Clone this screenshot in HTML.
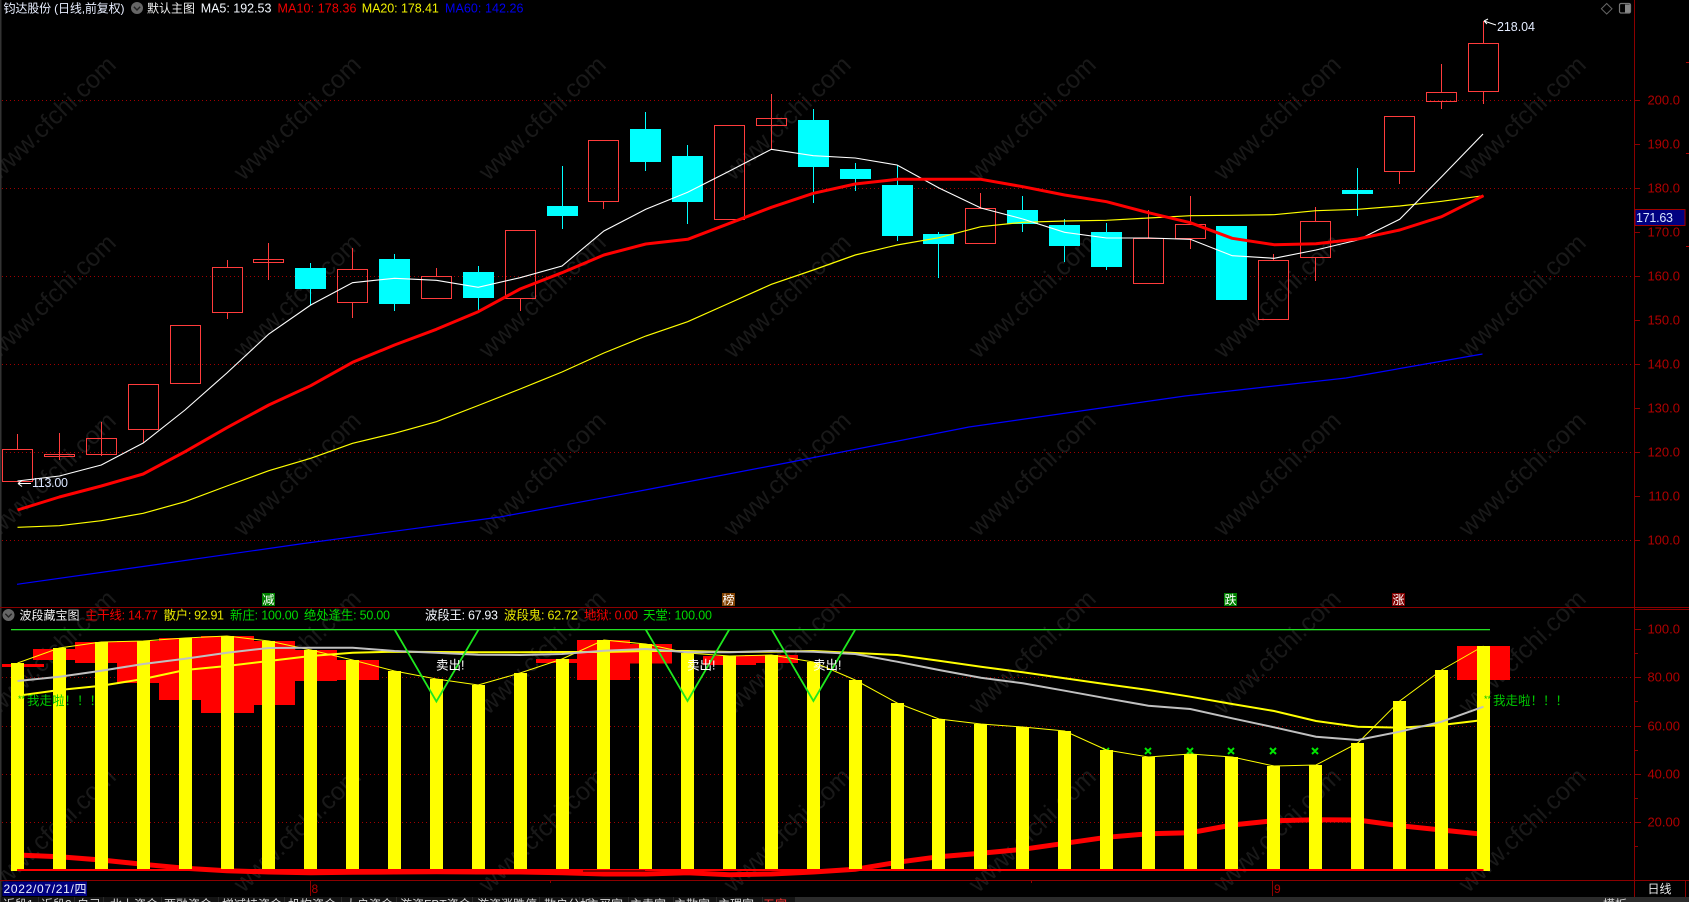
<!DOCTYPE html>
<html>
<head>
<meta charset="utf-8">
<style>
html,body{margin:0;padding:0;background:#000;width:1689px;height:902px;overflow:hidden}
svg{display:block;position:absolute;left:0;top:0}
text{font-family:"Liberation Sans","Noto Sans CJK SC",sans-serif;font-size:12.5px}
.cj{font-size:12px}
.wm text{font-size:25px;fill:#191919}
.ax text{font-size:13px;fill:#b00000;text-anchor:end}
.bt text{font-size:12px;fill:#d8d8d8}
</style>
</head>
<body>
<svg width="1689" height="902" viewBox="0 0 1689 902" xmlns="http://www.w3.org/2000/svg">
<rect width="1689" height="902" fill="#000"/>

<!-- watermark -->
<g class="wm" text-anchor="middle">
<text transform="translate(58 124) rotate(-44)">www.cfchi.com</text><text transform="translate(303 124) rotate(-44)">www.cfchi.com</text><text transform="translate(548 124) rotate(-44)">www.cfchi.com</text><text transform="translate(793 124) rotate(-44)">www.cfchi.com</text><text transform="translate(1038 124) rotate(-44)">www.cfchi.com</text><text transform="translate(1283 124) rotate(-44)">www.cfchi.com</text><text transform="translate(1528 124) rotate(-44)">www.cfchi.com</text>
<text transform="translate(58 302) rotate(-44)">www.cfchi.com</text><text transform="translate(303 302) rotate(-44)">www.cfchi.com</text><text transform="translate(548 302) rotate(-44)">www.cfchi.com</text><text transform="translate(793 302) rotate(-44)">www.cfchi.com</text><text transform="translate(1038 302) rotate(-44)">www.cfchi.com</text><text transform="translate(1283 302) rotate(-44)">www.cfchi.com</text><text transform="translate(1528 302) rotate(-44)">www.cfchi.com</text>
<text transform="translate(58 480) rotate(-44)">www.cfchi.com</text><text transform="translate(303 480) rotate(-44)">www.cfchi.com</text><text transform="translate(548 480) rotate(-44)">www.cfchi.com</text><text transform="translate(793 480) rotate(-44)">www.cfchi.com</text><text transform="translate(1038 480) rotate(-44)">www.cfchi.com</text><text transform="translate(1283 480) rotate(-44)">www.cfchi.com</text><text transform="translate(1528 480) rotate(-44)">www.cfchi.com</text>
<text transform="translate(58 658) rotate(-44)">www.cfchi.com</text><text transform="translate(303 658) rotate(-44)">www.cfchi.com</text><text transform="translate(548 658) rotate(-44)">www.cfchi.com</text><text transform="translate(793 658) rotate(-44)">www.cfchi.com</text><text transform="translate(1038 658) rotate(-44)">www.cfchi.com</text><text transform="translate(1283 658) rotate(-44)">www.cfchi.com</text><text transform="translate(1528 658) rotate(-44)">www.cfchi.com</text>
<text transform="translate(58 836) rotate(-44)">www.cfchi.com</text><text transform="translate(303 836) rotate(-44)">www.cfchi.com</text><text transform="translate(548 836) rotate(-44)">www.cfchi.com</text><text transform="translate(793 836) rotate(-44)">www.cfchi.com</text><text transform="translate(1038 836) rotate(-44)">www.cfchi.com</text><text transform="translate(1283 836) rotate(-44)">www.cfchi.com</text><text transform="translate(1528 836) rotate(-44)">www.cfchi.com</text>
</g>

<!-- frame lines -->
<rect x="0" y="0" width="1.5" height="897" fill="#333"/>
<g stroke="#8b0000" stroke-width="1" fill="none">
<path d="M0 607.5H1689M1635 609.5H1689M0 880.5H1689M1634.5 0V897M1685.5 880V897"/>
</g>

<!-- main grid -->
<g stroke="#a00000" stroke-width="1" stroke-dasharray="1 3" fill="none">
<path d="M2 100.5H1634M2 188.5H1634M2 276.5H1634M2 364.5H1634M2 452.5H1634M2 540.5H1634"/>
<path d="M2 677.5H1634M2 726.5H1634M2 774.5H1634M2 822.5H1634"/>
</g>

<!-- axis ticks -->
<g stroke="#8b0000" stroke-width="1" fill="none">
<path d="M1634 100.5h6M1634 144.5h6M1634 188.5h6M1634 232.5h6M1634 276.5h6M1634 320.5h6M1634 364.5h6M1634 408.5h6M1634 452.5h6M1634 496.5h6M1634 540.5h6"/>
<path d="M1635 629.5h6M1635 677.5h6M1635 726.5h6M1635 774.5h6M1635 822.5h6M1635 653.5h3M1635 701.5h3M1635 750.5h3M1635 798.5h3M1635 846.5h3"/>
<path d="M310.5 880V896M1272.5 880V896M550.5 880v3M1031.5 880v3"/>
<path d="M1686 62.5h3M1686 246.5h3M1686 153.5h3" stroke="#b00000"/>
</g>

<g class="ax">
<text x="1680" y="104.5">200.0</text>
<text x="1680" y="148.5">190.0</text>
<text x="1680" y="192.5">180.0</text>
<text x="1680" y="236.5">170.0</text>
<text x="1680" y="280.5">160.0</text>
<text x="1680" y="324.5">150.0</text>
<text x="1680" y="368.5">140.0</text>
<text x="1680" y="412.5">130.0</text>
<text x="1680" y="456.5">120.0</text>
<text x="1680" y="500.5">110.0</text>
<text x="1680" y="544.5">100.0</text>
<text x="1680" y="633.5">100.0</text>
<text x="1680" y="681.5">80.00</text>
<text x="1680" y="730.5">60.00</text>
<text x="1680" y="778.5">40.00</text>
<text x="1680" y="826.5">20.00</text>
</g>

<!-- current price tag -->
<rect x="1635" y="209.5" width="50" height="16" fill="#000080" stroke="#a00000"/>
<text x="1636" y="222" fill="#d8e4ff" textLength="37">171.63</text>

<!-- wicks red -->
<path fill="none" stroke="#ff3c3c" stroke-width="1" d="M17.5 434V449M59.5 433V460M101.5 422V456M143.5 430V443M227.5 260V267M227.5 313V319M268.5 243V280M352.5 248V269M352.5 303V318M436.5 268V276M520.5 299V311M603.5 202V209M771.5 94V149M980.5 193V208M1148.5 210V238M1190.5 196V224M1190.5 239V249M1273.5 254V260M1315.5 207V221M1315.5 258V281M1399.5 172V184M1441.5 64V92M1441.5 102V109M1483.5 21V43M1483.5 92V104"/>
<!-- wicks cyan -->
<path fill="none" stroke="#00ffff" stroke-width="1" d="M310.5 263V305M394.5 254V311M478.5 266V310M562.5 166V229M645.5 112V171M687.5 145V224M813.5 109V203M855.5 163V191M897.5 165V241M938.5 232V278M1022.5 196V232M1064.5 219V262M1106.5 223V270M1357.5 168V216"/>
<!-- hollow candles -->
<g fill="#000" fill-opacity="0" stroke="#ff3c3c" stroke-width="1">
<rect x="2.5" y="449.5" width="30" height="32"/>
<rect x="44.5" y="454.5" width="30" height="2"/>
<rect x="86.5" y="438.5" width="30" height="16"/>
<rect x="128.5" y="384.5" width="30" height="45"/>
<rect x="170.5" y="325.5" width="30" height="58"/>
<rect x="212.5" y="267.5" width="30" height="45"/>
<rect x="253.5" y="259.5" width="30" height="3"/>
<rect x="337.5" y="269.5" width="30" height="33"/>
<rect x="421.5" y="276.5" width="30" height="22"/>
<rect x="505.5" y="230.5" width="30" height="68"/>
<rect x="588.5" y="140.5" width="30" height="61"/>
<rect x="714.5" y="125.5" width="30" height="94"/>
<rect x="756.5" y="118.5" width="30" height="7"/>
<rect x="965.5" y="208.5" width="30" height="35"/>
<rect x="1133.5" y="238.5" width="30" height="45"/>
<rect x="1175.5" y="224.5" width="30" height="14"/>
<rect x="1258.5" y="260.5" width="30" height="59"/>
<rect x="1300.5" y="221.5" width="30" height="36"/>
<rect x="1384.5" y="116.5" width="30" height="55"/>
<rect x="1426.5" y="92.5" width="30" height="9"/>
<rect x="1468.5" y="43.5" width="30" height="48"/>
</g>
<!-- solid candles -->
<g fill="#00ffff">
<rect x="295" y="268" width="31" height="21"/>
<rect x="379" y="259" width="31" height="45"/>
<rect x="463" y="272" width="31" height="26"/>
<rect x="547" y="206" width="31" height="10"/>
<rect x="630" y="129" width="31" height="33"/>
<rect x="672" y="156" width="31" height="46"/>
<rect x="798" y="120" width="31" height="47"/>
<rect x="840" y="169" width="31" height="10"/>
<rect x="882" y="185" width="31" height="51"/>
<rect x="923" y="234" width="31" height="10"/>
<rect x="1007" y="210" width="31" height="14"/>
<rect x="1049" y="225" width="31" height="21"/>
<rect x="1091" y="232" width="31" height="35"/>
<rect x="1216" y="226" width="31" height="74"/>
<rect x="1342" y="190" width="31" height="4"/>
</g>

<!-- MA60 -->
<polyline fill="none" stroke="#0000ff" stroke-width="1.2" points="17,584.3 143,566.5 300,544 500,517 645,490 786,463 969,427 1185,396 1346,378 1482.5,354"/>
<!-- MA20 -->
<polyline fill="none" stroke="#ffff00" stroke-width="1.2" points="17.5,527.3 59.4,525.7 101.3,520.7 143.2,513.3 185,501.7 226.9,486 268.8,470.7 310.7,458.3 352.6,443.3 394.5,433.3 436.4,421.7 478.2,405.5 520.1,389 562,372 603.9,353 645.8,336 687.7,321.7 729.6,303 771.4,284.3 813.3,270 855.2,255 897.1,245 939,237.7 980.9,226.7 1022.8,222.3 1064.6,221 1106.5,220.3 1148.4,218 1190.3,215.7 1232.2,215.3 1274.1,214.7 1316,210.7 1357.8,209.3 1399.7,206 1441.6,201.3 1483.5,195.7"/>
<!-- MA5 -->
<polyline fill="none" stroke="#ffffff" stroke-width="1.1" points="17.5,481 59.4,476 101.3,465 143.2,443 185,410 226.9,373 268.8,334 310.7,305 352.6,282.7 394.5,278.3 436.4,280.3 478.2,287.3 520.1,277.7 562,266 603.9,231 645.8,209.3 687.7,192.3 729.6,171 771.4,149.3 813.3,155.7 855.2,158 897.1,165 939,188 980.9,208 1022.8,219 1064.6,232.3 1106.5,238 1148.4,238 1190.3,239.3 1232.2,255.7 1274.1,258.3 1316,250 1357.8,240 1399.7,219.3 1441.6,176.7 1483,134"/>
<!-- MA10 -->
<polyline fill="none" stroke="#ff0000" stroke-width="3" stroke-linejoin="round" points="17.5,510 59.4,497 101.3,486 143.2,474 185,451.7 226.9,427.7 268.8,405 310.7,385.7 352.6,362.3 394.5,345 436.4,329.3 478.2,311.7 520.1,289 562,272.7 603.9,255 645.8,244 687.7,239.3 729.6,223.3 771.4,207.3 813.3,193.3 855.2,184 897.1,179.3 939,179.3 980.9,179.3 1022.8,186.7 1064.6,195 1106.5,201.7 1148.4,212.7 1190.3,222.7 1232.2,238.3 1274.1,244.7 1316,243.7 1357.8,239 1399.7,230 1441.6,216.7 1483.5,195.7"/>

<!-- extremes -->
<path fill="none" stroke="#ffffff" stroke-width="1" d="M1484 21L1496 25M1484 21l4-2M1484 21l3 3"/>
<text x="1497" y="31" fill="#e4ecff" textLength="38">218.04</text>
<path fill="none" stroke="#ffffff" stroke-width="1" d="M18 483.5H31M18 483.5l4-3M18 483.5l4 3"/>
<text x="32" y="487" fill="#dbe6ff" textLength="36">113.00</text>

<!-- top legend -->
<text x="3.5" y="12.5" fill="#e8eeff" class="cj" textLength="121">钧达股份 (日线,前复权)</text>
<circle cx="137" cy="8" r="6" fill="#666"/>
<path d="M133.8 6.8L137 10L140.2 6.8" fill="none" stroke="#222" stroke-width="1.4"/>
<text x="147" y="12.5" fill="#f0f0f0" class="cj">默认主图</text>
<text x="200.7" y="12.5" fill="#f4f8ff" textLength="70.7">MA5: 192.53</text>
<text x="277.5" y="12.5" fill="#f00000" textLength="79">MA10: 178.36</text>
<text x="361.8" y="12.5" fill="#f0f000" textLength="77">MA20: 178.41</text>
<text x="445" y="12.5" fill="#0000f0" textLength="78.5">MA60: 142.26</text>

<!-- top-right icons -->
<path d="M1606.7 3.5L1612 8.8L1606.7 14L1601.4 8.8Z" fill="none" stroke="#666" stroke-width="1"/>
<rect x="1619.5" y="3.5" width="11" height="9.5" rx="1.5" fill="none" stroke="#777" stroke-width="1.2"/>
<rect x="1625" y="4.5" width="5" height="8" fill="#888"/>

<!-- badges -->
<rect x="262" y="593" width="13" height="13" fill="#008000"/>
<text x="262.5" y="604" fill="#fff" class="cj">减</text>
<rect x="722" y="593" width="13" height="13" fill="#804000"/>
<text x="722.5" y="604" fill="#fff" class="cj">榜</text>
<rect x="1224" y="593" width="13" height="13" fill="#008000"/>
<text x="1224.5" y="604" fill="#fff" class="cj">跌</text>
<rect x="1392" y="593" width="13" height="13" fill="#800000"/>
<text x="1392.5" y="604" fill="#fff" class="cj">涨</text>

<!-- sub legend -->
<circle cx="8.5" cy="615" r="6" fill="#666"/>
<path d="M5.3 613.8L8.5 617L11.7 613.8" fill="none" stroke="#222" stroke-width="1.4"/>
<text x="19.5" y="619.5" fill="#f0f0f0" class="cj">波段藏宝图</text>
<text x="85" y="619.5" fill="#f00000" textLength="73">主干线: 14.77</text>
<text x="163.5" y="619.5" fill="#e8e800" textLength="60.5">散户: 92.91</text>
<text x="230" y="619.5" fill="#00d800" textLength="68.5">新庄: 100.00</text>
<text x="304" y="619.5" fill="#00d800" textLength="86">绝处逢生: 50.00</text>
<text x="425" y="619.5" fill="#f4f8ff" textLength="73">波段王: 67.93</text>
<text x="504" y="619.5" fill="#e8e800" textLength="74">波段鬼: 62.72</text>
<text x="584" y="619.5" fill="#f00000" textLength="54">地狱: 0.00</text>
<text x="643" y="619.5" fill="#00d800" textLength="69">天堂: 100.00</text>

<!-- red blocks -->
<g fill="#ff0000">
<rect x="2" y="664" width="42" height="3"/>
<rect x="33" y="649" width="53" height="11"/>
<rect x="75" y="642" width="53" height="21"/>
<rect x="117" y="641" width="53" height="42"/>
<rect x="159" y="638" width="53" height="62"/>
<rect x="201" y="636" width="53" height="77"/>
<rect x="242" y="641" width="53" height="64"/>
<rect x="284" y="650" width="53" height="31"/>
<rect x="326" y="660" width="53" height="20"/>
<rect x="536" y="659" width="53" height="4"/>
<rect x="577" y="640" width="53" height="40"/>
<rect x="619" y="644" width="53" height="19.5"/>
<rect x="703" y="656" width="53" height="9"/>
<rect x="745" y="655" width="53" height="8"/>
<rect x="1457" y="646" width="53" height="34"/>
</g>

<!-- green x marks -->
<path fill="none" stroke="#00e800" stroke-width="2" d="M1103 748l6 6m0-6l-6 6M1145 748l6 6m0-6l-6 6M1187 748l6 6m0-6l-6 6M1228 748l6 6m0-6l-6 6M1270 748l6 6m0-6l-6 6M1312 748l6 6m0-6l-6 6"/>

<!-- main trunk thick line -->
<polyline fill="none" stroke="#ff0000" stroke-width="5" points="17.5,855 59.4,856.7 101.3,860 143.2,864.3 185,868.3 226.9,870.7 268.8,872 310.7,872.7 352.6,872.3 394.5,872 436.4,871.7 478.2,872 520.1,872 562,872.7 603.9,874 645.8,874 687.7,872.7 729.6,874.7 771.4,874 813.3,872 855.2,869.3 897.1,862.3 939,856.7 980.9,853.3 1022.8,849.3 1064.6,843.3 1106.5,837.3 1148.4,833.7 1190.3,832.7 1232.2,825 1274.1,820.7 1316,819.7 1357.8,820 1399.7,825.7 1441.6,830 1483.5,834.3"/>

<!-- yellow bars -->
<g fill="#ffff00">
<rect x="11" y="663" width="13" height="208"/>
<rect x="53" y="648" width="13" height="223"/>
<rect x="95" y="642" width="13" height="229"/>
<rect x="137" y="641" width="13" height="230"/>
<rect x="179" y="638" width="13" height="233"/>
<rect x="221" y="636" width="13" height="235"/>
<rect x="262" y="641" width="13" height="230"/>
<rect x="304" y="650" width="13" height="221"/>
<rect x="346" y="660" width="13" height="211"/>
<rect x="388" y="671" width="13" height="200"/>
<rect x="430" y="679" width="13" height="192"/>
<rect x="472" y="685" width="13" height="186"/>
<rect x="514" y="673" width="13" height="198"/>
<rect x="556" y="659" width="13" height="212"/>
<rect x="597" y="640" width="13" height="231"/>
<rect x="639" y="644" width="13" height="227"/>
<rect x="681" y="653" width="13" height="218"/>
<rect x="723" y="656" width="13" height="215"/>
<rect x="765" y="655" width="13" height="216"/>
<rect x="807" y="662" width="13" height="209"/>
<rect x="849" y="680" width="13" height="191"/>
<rect x="891" y="703" width="13" height="168"/>
<rect x="932" y="719" width="13" height="152"/>
<rect x="974" y="724" width="13" height="147"/>
<rect x="1016" y="727" width="13" height="144"/>
<rect x="1058" y="731" width="13" height="140"/>
<rect x="1100" y="750" width="13" height="121"/>
<rect x="1142" y="757" width="13" height="114"/>
<rect x="1184" y="754" width="13" height="117"/>
<rect x="1225" y="757" width="13" height="114"/>
<rect x="1267" y="766" width="13" height="105"/>
<rect x="1309" y="765" width="13" height="106"/>
<rect x="1351" y="743" width="13" height="128"/>
<rect x="1393" y="701" width="13" height="170"/>
<rect x="1435" y="670" width="13" height="201"/>
<rect x="1477" y="646" width="13" height="225"/>
</g>

<!-- baseline -->
<rect x="17" y="869" width="1466.5" height="2" fill="#ff0000"/>
<rect x="583" y="870.5" width="62" height="1" fill="#000"/>

<!-- thin yellow through bar tops -->
<polyline fill="none" stroke="#ffff00" stroke-width="1" points="17.5,663 59.4,648 101.3,642 143.2,641 185,638 226.9,636 268.8,641 310.7,650 352.6,660 394.5,671 436.4,679 478.2,685 520.1,673 562,659 603.9,640 645.8,644 687.7,653 729.6,656 771.4,655 813.3,662 855.2,680 897.1,703 939,719 980.9,724 1022.8,727 1064.6,731 1106.5,750 1148.4,757 1190.3,754 1232.2,757 1274.1,766 1316,765 1357.8,743 1399.7,701 1441.6,670 1483.5,646"/>

<!-- thick yellow -->
<polyline fill="none" stroke="#ffff00" stroke-width="2" points="17.5,695.7 59.4,690 101.3,685.7 143.2,679 185,670 226.9,666 268.8,661 310.7,656 352.6,652.7 394.5,651.7 436.4,652 478.2,652.3 520.1,652.3 562,652 603.9,652 645.8,651 687.7,651 729.6,652 771.4,651.7 813.3,651 855.2,653 897.1,655 939,660.7 980.9,666.7 1022.8,672.3 1064.6,678.3 1106.5,684.3 1148.4,690 1190.3,696.7 1232.2,704 1274.1,711 1316,721 1357.8,726.7 1399.7,727.7 1441.6,725 1483.5,720"/>
<!-- gray line -->
<polyline fill="none" stroke="#c0c0c0" stroke-width="2" points="17.5,681 59.4,676.7 101.3,670.7 143.2,664 185,658.7 226.9,652.7 268.8,648 310.7,647.7 352.6,647.7 394.5,651 436.4,652.7 478.2,654.7 520.1,655 562,654 603.9,650.7 645.8,649 687.7,652.3 729.6,652.3 771.4,651 813.3,651.7 855.2,654 897.1,661.7 939,670 980.9,677.7 1022.8,683.3 1064.6,690.7 1106.5,698.3 1148.4,705.7 1190.3,709 1232.2,718.3 1274.1,727.3 1316,736.7 1357.8,740 1399.7,731.7 1441.6,721.7 1483.5,706.7"/>

<!-- green top line and Vs -->
<rect x="11" y="629" width="1479" height="1.3" fill="#22e022"/>
<g fill="none" stroke="#1fe81f" stroke-width="1.8">
<polyline points="394.6,629.5 436.4,701.5 478.6,629.5"/>
<polyline points="645.7,629.5 687.5,701 729.3,629.5"/>
<polyline points="771.7,629.5 813.4,701 855.3,629.5"/>
</g>

<!-- signal text -->
<g fill="#ffffff" class="cj">
<text x="436" y="669.5">卖出!</text>
<text x="687" y="669.5">卖出!</text>
<text x="813" y="669.5">卖出!</text>
</g>
<g fill="#00c800" class="cj">
<text x="18" y="702" style="font-size:9px">**</text>
<text x="27" y="705">我走啦！！！</text>
<text x="1484" y="702" style="font-size:9px">**</text>
<text x="1493" y="705">我走啦！！！</text>
</g>

<!-- time axis -->
<rect x="2.5" y="881.5" width="84.5" height="14.5" fill="#000080"/>
<text x="3.5" y="893" fill="#eef2ff" class="cj" textLength="83">2022/07/21/四</text>
<text x="311.5" y="893" fill="#b00000" class="cj">8</text>
<text x="1274" y="893" fill="#b00000" class="cj">9</text>
<text x="1647.5" y="893" fill="#e8e8e8" class="cj">日线</text>

<!-- bottom tabs (cut off) -->
<rect x="0" y="897" width="1689" height="5" fill="#2b2b2b"/>
<g fill="#141414">
<rect x="1" y="897" width="37" height="5"/><rect x="39" y="897" width="35" height="5"/><rect x="75" y="897" width="28" height="5"/><rect x="104" y="897" width="57" height="5"/><rect x="162" y="897" width="56" height="5"/><rect x="219" y="897" width="65" height="5"/><rect x="285" y="897" width="56" height="5"/><rect x="342" y="897" width="54" height="5"/><rect x="397" y="897" width="75" height="5"/><rect x="473" y="897" width="66" height="5"/><rect x="540" y="897" width="39" height="5"/><rect x="580" y="897" width="48" height="5"/><rect x="629" y="897" width="44" height="5"/><rect x="674" y="897" width="42" height="5"/><rect x="717" y="897" width="45" height="5"/><rect x="763" y="897" width="32" height="5"/>
</g>
<g class="bt">
<text x="3" y="908.5">近段1</text><text x="41" y="908.5">近段2</text><text x="77" y="908.5">自己</text>
<text x="110" y="908.5">北上资金</text><text x="164" y="908.5">两融资金</text><text x="222" y="908.5">增减持资金</text>
<text x="288" y="908.5">机构资金</text><text x="345" y="908.5">大户资金</text><text x="400" y="908.5">游资FBT资金</text>
<text x="477" y="908.5">游资涨跌停</text><text x="544" y="908.5">散户分析</text><text x="587" y="908.5">主买家</text>
<text x="630" y="908.5">主卖家</text><text x="674" y="908.5">主散家</text><text x="718" y="908.5">主理家</text>
<text x="763" y="908.5" style="fill:#ff3333">五家</text>
<text x="1603" y="908.5">模板</text>
</g>
</svg>
</body>
</html>
